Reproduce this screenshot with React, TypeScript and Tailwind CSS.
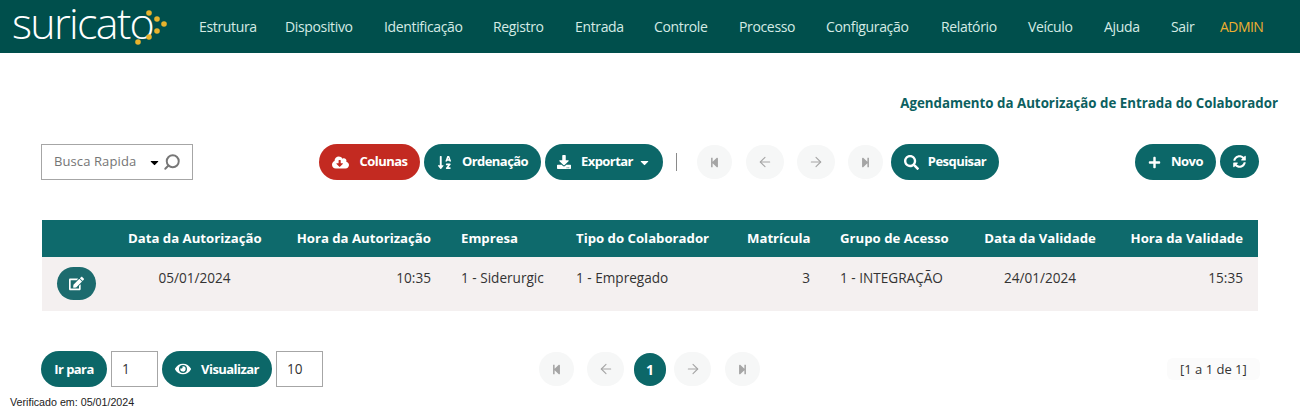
import React from "react";
import { FaCloudDownloadAlt, FaSortAlphaDown, FaDownload, FaCaretDown, FaStepBackward, FaStepForward, FaSearch, FaPlus, FaSyncAlt, FaEdit, FaEye } from "react-icons/fa";
import { ArrowLeft, ArrowRight, Search } from "lucide-react";

const navItems = [
  ["Estrutura", "w-[86px]"],
  ["Dispositivo", "w-[99px]"],
  ["Identificação", "w-[109px]"],
  ["Registro", "w-[82px]"],
  ["Entrada", "w-[79px]"],
  ["Controle", "w-[85px]"],
  ["Processo", "w-[87px]"],
  ["Configuração", "w-[115px]"],
  ["Relatório", "w-[87px]"],
  ["Veículo", "w-[76px]"],
  ["Ajuda", "w-[67px]"],
  ["Sair", "w-[78px]"],
];

function Logo() {
  return (
    <div className="relative flex items-center w-[199px] pl-[12px] h-full shrink-0">
      <span className="font-['Open_Sans',sans-serif] font-light text-[43px] leading-[40px] text-white tracking-[-1.7px] mt-[-7px] shrink-0">suricato</span>
      <svg width="180" height="53" viewBox="0 0 180 53" className="absolute left-0 top-0">
        <circle cx="149" cy="13" r="2.8" fill="#e8b32c" />
        <circle cx="157" cy="19" r="2.8" fill="#e8b32c" />
        <circle cx="164" cy="24" r="2.8" fill="#e8b32c" />
        <circle cx="157" cy="31" r="2.8" fill="#e8b32c" />
        <circle cx="149" cy="37" r="2.8" fill="#e8b32c" />
        <circle cx="138" cy="42" r="2.8" fill="#e8b32c" />
      </svg>
    </div>
  );
}

function Pill({ children, className = "" }: { children: React.ReactNode; className?: string }) {
  return (
    <button className={`h-[36px] rounded-full bg-[#0c6768] text-white font-bold text-[13px] tracking-[-0.55px] flex items-center justify-center shrink-0 ${className}`}>
      {children}
    </button>
  );
}

function Ghost({ children, className = "" }: { children: React.ReactNode; className?: string }) {
  return (
    <span className={`h-[34px] rounded-full bg-[#f6f7f7] text-[#a5a5a5] flex items-center justify-center shrink-0 ${className}`}>
      {children}
    </span>
  );
}

const th = "px-[15px] h-[37px] font-bold text-[13.2px] text-white whitespace-nowrap";
const td = "px-[15px] pt-[11px] pb-[23px] align-top text-[13.6px] text-[#333333] whitespace-nowrap font-normal";

export default function App() {
  return (
    <div className="w-[1300px] h-[417px] bg-white font-['Open_Sans',sans-serif] overflow-hidden">
      <header className="h-[53px] bg-[#004f4c] flex items-center">
        <Logo />
        <nav className="flex items-center text-[14px] text-[#d5ebe5] tracking-[-0.35px]">
          {navItems.map(([n, w]) => (
            <span key={n} className={`${w} whitespace-nowrap`}>{n}</span>
          ))}
        </nav>
        <span className="text-[14px] text-[#eeaf30] tracking-[-0.55px] ml-[-29px]">ADMIN</span>
      </header>

      <div className="h-[41px] pr-[22px] pt-[41px] flex justify-end text-[13.3px] font-bold text-[#0c5f60] leading-[18px]">
        Agendamento da Autorização de Entrada do Colaborador
      </div>

      <div className="mt-[9px] pt-[41px] h-[93px] pl-[41px] flex items-start">
        <div className="w-[152px] h-[36px] border border-[#a6a6a6] flex items-center pl-[12px] text-[13px] text-[#757575]">
          <span className="tracking-[0.1px] whitespace-nowrap">Busca Rapida</span>
          <FaCaretDown className="text-black ml-[12px] text-[13px] shrink-0" />
          <Search className="w-[18px] h-[18px] text-[#777777] -scale-x-100 shrink-0 ml-[2px]" strokeWidth={2.6} />
        </div>

        <div className="ml-[126px] flex items-center gap-[4px]">
          <Pill className="w-[101px] bg-[#c32a21] gap-[11px]"><FaCloudDownloadAlt className="text-[17px]" />Colunas</Pill>
          <Pill className="w-[117px] gap-[10px]"><FaSortAlphaDown className="text-[15px]" />Ordenação</Pill>
          <Pill className="w-[118px] gap-[10px]"><FaDownload className="text-[14px]" />Exportar<FaCaretDown className="text-[13px] ml-[-5px]" /></Pill>
        </div>
        <span className="ml-[13px] mt-[9px] w-px h-[18px] bg-[#8a8a8a]" />
        <div className="ml-[20px] flex items-center mt-px">
          <Ghost className="w-[35px]"><FaStepBackward className="text-[11px]" /></Ghost>
          <Ghost className="w-[38px] ml-[14px]"><ArrowLeft className="w-[16px] h-[16px]" strokeWidth={1.6} /></Ghost>
          <Ghost className="w-[38px] ml-[13px]"><ArrowRight className="w-[16px] h-[16px]" strokeWidth={1.6} /></Ghost>
          <Ghost className="w-[35px] ml-[13px]"><FaStepForward className="text-[11px]" /></Ghost>
        </div>
        <Pill className="w-[108px] ml-[8px] gap-[9px]"><FaSearch className="text-[15px]" />Pesquisar</Pill>
        <Pill className="w-[81px] ml-[136px] gap-[10px]"><FaPlus className="text-[13px]" />Novo</Pill>
        <Pill className="w-[39px] ml-[4px] mt-px !h-[33px]"><FaSyncAlt className="text-[13px]" /></Pill>
      </div>

      <div className="mt-[24px] pl-[42px]">
        <table className="w-[1216px] table-fixed border-collapse">
          <colgroup>
            <col className="w-[71px]" />
            <col className="w-[163px]" />
            <col className="w-[170px]" />
            <col className="w-[115px]" />
            <col className="w-[171px]" />
            <col className="w-[93px]" />
            <col className="w-[144px]" />
            <col className="w-[142px]" />
            <col className="w-[147px]" />
          </colgroup>
          <thead className="bg-[#0e6a6c]">
            <tr>
              <th className={th}></th>
              <th className={`${th} text-center`}>Data da Autorização</th>
              <th className={`${th} text-right`}>Hora da Autorização</th>
              <th className={`${th} text-left`}>Empresa</th>
              <th className={`${th} text-left`}>Tipo do Colaborador</th>
              <th className={`${th} text-right`}>Matrícula</th>
              <th className={`${th} text-left`}>Grupo de Acesso</th>
              <th className={`${th} text-center`}>Data da Validade</th>
              <th className={`${th} text-right`}>Hora da Validade</th>
            </tr>
          </thead>
          <tbody className="bg-[#f4f0f0]">
            <tr>
              <td className="px-[15px] py-[10px] align-top">
                <span className="w-[39px] h-[33px] rounded-full bg-[#1c6b6e] text-white flex items-center justify-center"><FaEdit className="text-[15px]" /></span>
              </td>
              <td className={`${td} text-center`}>05/01/2024</td>
              <td className={`${td} text-right`}>10:35</td>
              <td className={`${td} text-left`}>1 - Siderurgic</td>
              <td className={`${td} text-left`}>1 - Empregado</td>
              <td className={`${td} text-right`}>3</td>
              <td className={`${td} text-left`}>1 - INTEGRAÇÃO</td>
              <td className={`${td} text-center`}>24/01/2024</td>
              <td className={`${td} text-right`}>15:35</td>
            </tr>
          </tbody>
        </table>
      </div>

      <div className="mt-[40px] pl-[41px] flex items-start">
        <Pill className="w-[66px]">Ir para</Pill>
        <span className="ml-[4px] w-[47px] h-[36px] border border-[#a6a6a6] flex items-center pl-[10px] text-[13.6px] text-[#333333]">1</span>
        <Pill className="w-[110px] ml-[4px] gap-[10px]"><FaEye className="text-[16px]" />Visualizar</Pill>
        <span className="ml-[4px] w-[47px] h-[36px] border border-[#a6a6a6] flex items-center pl-[10px] text-[13.6px] text-[#333333]">10</span>
        <div className="ml-[216px] flex items-center mt-px">
          <Ghost className="w-[35px]"><FaStepBackward className="text-[11px]" /></Ghost>
          <Ghost className="w-[37px] ml-[13px]"><ArrowLeft className="w-[16px] h-[16px]" strokeWidth={1.6} /></Ghost>
          <span className="w-[32px] h-[33px] ml-[10px] rounded-full bg-[#0c6768] text-white font-bold text-[14px] flex items-center justify-center">1</span>
          <Ghost className="w-[37px] ml-[8px]"><ArrowRight className="w-[16px] h-[16px]" strokeWidth={1.6} /></Ghost>
          <Ghost className="w-[35px] ml-[14px]"><FaStepForward className="text-[11px]" /></Ghost>
        </div>
        <span className="ml-[407px] mt-[7px] h-[22px] px-[13px] bg-[#fbfbfb] rounded-[6px] text-[13px] text-[#333333] leading-[22px] whitespace-nowrap">[1 a 1 de 1]</span>
      </div>

      <div className="mt-[9px] pl-[10px] font-['Liberation_Sans',sans-serif] text-[10.7px] leading-[12px] text-[#222222]">Verificado em: 05/01/2024</div>
    </div>
  );
}
